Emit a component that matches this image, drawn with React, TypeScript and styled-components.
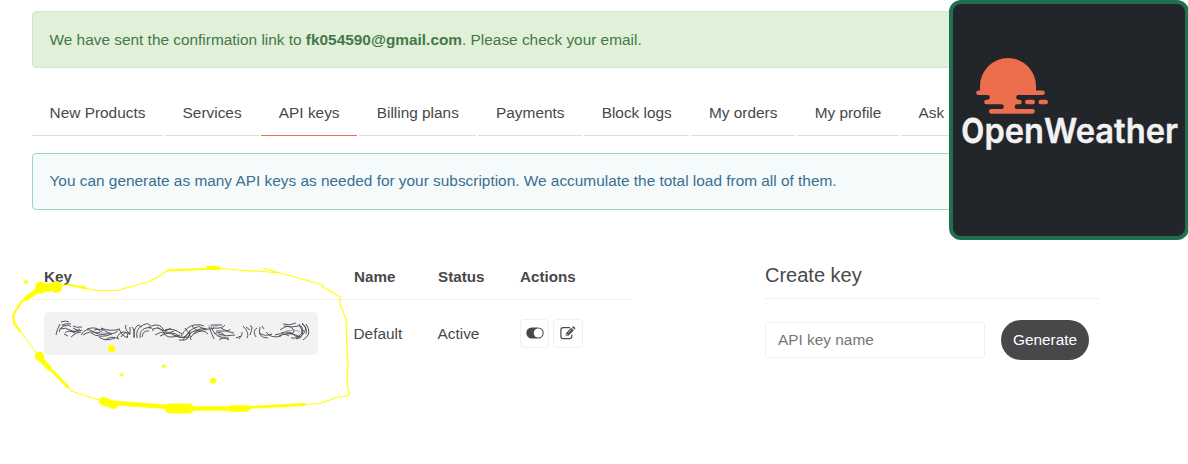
import React from "react";
import styled, { createGlobalStyle } from "styled-components";

const GlobalStyle = createGlobalStyle`
  * { box-sizing: border-box; }
  html, body { margin: 0; background: #fff; overflow: hidden; }
  body { font: 15.4px/22px "Liberation Sans", Arial, sans-serif; color: #48484a; }
`;

const Page = styled.div`
  position: relative;
  width: 1188px;
  height: 464px;
  overflow: hidden;
  padding: 11px 32px 0;
`;

const Alert = styled.div<{ $tone: "success" | "info" }>`
  height: 57px;
  padding: ${(p) => (p.$tone === "success" ? 17 : 16)}px 16.5px;
  border: 1px solid ${(p) => (p.$tone === "success" ? "#d3e7c4" : "#98d6cc")};
  border-radius: 4px;
  background: ${(p) => (p.$tone === "success" ? "#e1f0d9" : "#f5fafb")};
  color: ${(p) => (p.$tone === "success" ? "#44784a" : "#3a6f92")};
  white-space: nowrap;
`;

const Tabs = styled.nav`
  display: flex;
  gap: 2px;
  height: 45px;
  margin: 23px 0 17px;
  white-space: nowrap;
`;

const Tab = styled.a<{ $active?: boolean }>`
  height: 45px;
  padding: 11px 17.6px 0;
  border-bottom: 1px solid ${(p) => (p.$active ? "#e96e50" : "#ddd")};
  &:last-child { flex: 1; }
`;

const Columns = styled.div`
  display: flex;
  gap: 135px;
  margin-top: 46px;
`;

const KeyTable = styled.table`
  width: 598px;
  height: 111px;
  border-collapse: collapse;
  table-layout: fixed;
`;

const HeadCell = styled.th<{ $width: number }>`
  width: ${(p) => p.$width}px;
  height: 43px;
  padding: 0 0 0 12px;
  border-bottom: 1px solid #f0f0f0;
  font-size: 15.2px;
  text-align: left;
`;

const Cell = styled.td<{ $text?: boolean }>`
  height: 68px;
  padding: ${(p) => (p.$text ? 2 : 0)}px 0 0 ${(p) => (p.$text ? 11.5 : 12)}px;
`;

const KeyChip = styled.div`
  width: 274px;
  height: 43px;
  border-radius: 5px;
  background: #f2f2f2;
`;

const Actions = styled.div`
  display: flex;
  gap: 4px;
`;

const ActionButton = styled.button<{ $width: number }>`
  display: flex;
  align-items: center;
  justify-content: center;
  width: ${(p) => p.$width}px;
  height: 29px;
  padding: 0 0 1px;
  border: 1px solid #f0f0f0;
  border-radius: 4px;
  background: #fff;
  color: #48484a;
`;

const CreatePanel = styled.section`
  width: 334px;
`;

const PanelTitle = styled.h4`
  height: 43px;
  margin: 0;
  padding-top: 7px;
  border-bottom: 1px solid #f0f0f0;
  font-size: 20px;
  font-weight: 400;
  line-height: 24px;
`;

const Form = styled.form`
  display: flex;
  align-items: center;
  gap: 16px;
  margin-top: 21px;
`;

const NameInput = styled.input`
  width: 220px;
  height: 36px;
  padding: 0 12px;
  border: 1px solid #f0f0f0;
  border-radius: 3px;
  font: inherit;
  &::placeholder { color: #777; opacity: 1; }
`;

const GenerateButton = styled.button`
  width: 88px;
  height: 40px;
  padding: 0;
  border: 0;
  border-radius: 20px;
  background: #48484a;
  color: #fff;
  font: inherit;
`;

const BrandCard = styled.aside`
  position: absolute;
  top: 0;
  left: 949px;
  width: 240px;
  height: 240px;
  border: 4px solid #207050;
  border-radius: 12px;
  background: #22252a;
`;

const Drawing = styled.svg`
  display: block;
`;

const Overlay = styled.svg`
  position: absolute;
  left: 0;
  top: 250px;
  pointer-events: none;
`;

const tabs = ["New Products", "Services", "API keys", "Billing plans", "Payments", "Block logs", "My orders", "My profile", "Ask"];

function BrandLogo() {
  return (
    <Drawing width="232" height="232" viewBox="953 4 232 232">
      <g fill="#ec6e4c">
        <path d="M980 90.400V86A28 28 0 0 1 1036 86V90.400H1042.500A2.300 2.300 0 0 1 1042.500 95H1018.500A2.300 2.300 0 0 0 1018.500 99.700H1019.500A2.300 2.300 0 0 1 1019.500 104.300H1017A2.300 2.300 0 0 0 1017 109H1032.500A2.300 2.300 0 0 1 1032.500 113.700H991.300A2.300 2.300 0 0 1 991.300 109H1001.500A2.300 2.300 0 0 0 1001.500 104.300H986.500A2.300 2.300 0 0 1 986.500 99.700H987.500A2.300 2.300 0 0 0 987.500 95H978.500A2.300 2.300 0 0 1 978.500 90.400Z" />
        <rect x="1025" y="99.700" width="10" height="4.600" rx="2.300" />
        <rect x="1038.500" y="99.700" width="9.500" height="4.600" rx="2.300" />
      </g>
      <text y="143" fill="#f2f2f2" stroke="#f2f2f2" strokeWidth=".4" fontFamily="Inter, sans-serif" fontWeight="600" fontSize="33.500">
        <tspan x="961.500" textLength="22.500" lengthAdjust="spacingAndGlyphs" strokeWidth="1">O</tspan>
        <tspan x="984.500" textLength="59.500" lengthAdjust="spacingAndGlyphs">pen</tspan>
        <tspan x="1044" textLength="134" lengthAdjust="spacingAndGlyphs">Weather</tspan>
      </text>
    </Drawing>
  );
}

function ToggleIcon() {
  return (
    <Drawing width="18" height="12" viewBox="0 0 18 12">
      <rect x=".3" y=".5" width="17.400" height="11" rx="5.500" fill="#48484a" />
      <circle cx="12.200" cy="6" r="4.500" fill="#fff" />
    </Drawing>
  );
}

function EditIcon() {
  return (
    <Drawing width="16" height="14" viewBox="0 0 16 14">
      <path d="M10 1.600H3A2.100 2.100 0 0 0 .9 3.700V10.500A2.100 2.100 0 0 0 3 12.600H9.700A2.100 2.100 0 0 0 11.800 10.500V8.800" fill="none" stroke="#48484a" strokeWidth="1.200" />
      <path d="M5.800 7.200 11.300 1.700 13.800 4.200 8.300 9.700H5.800ZM12 1 12.700.4Q13.200 0 13.700.4L15.100 1.800Q15.500 2.300 15.100 2.800L14.500 3.500Z" fill="#48484a" />
      <path d="M6.500 7.700V9H7.800M8 7.100 11.400 3.700" fill="none" stroke="#fff" strokeWidth=".6" />
    </Drawing>
  );
}

function Scrambled() {
  return (
    <g fill="none" stroke="#4c4c54" strokeWidth=".95">
      <path d="M56 85Q57 79 59 76L60 74M59 82Q59 78 64 76T71 77M61 72Q66 70 69 72M62 75Q66 73 71 74M60 79Q66 77 70 80T80 79M65 83Q68 79 75 83M73 76Q76 78 82 77M71 87Q76 82 81 82M70 81Q77 83 82 80M73 78L79 81M64 84L68 86" />
      <path d="M81 85Q86 77 92 81T103 80M83 85Q91 80 96 83T111 83M87 79Q96 76 100 81M91 83Q100 89 112 84M94 80Q103 78 107 82T118 81M99 87Q105 92 115 88M101 78Q110 82 120 79M105 90Q112 85 119 89" />
      <path d="M117 88Q119 82 124 82T127 88M119 79Q123 88 128 87M121 87Q126 79 130 85M126 75Q124 79 130 84V77M132 77Q135 80 134 88M134 87Q133 79 138 75L142 77M137 88Q135 79 143 75T150 79M140 88Q139 80 146 78T153 81M142 87Q143 80 149 81" />
      <path d="M151 76Q160 73 163 79T174 81M153 79Q161 76 164 83T180 85M155 85Q160 81 166 83M157 77Q164 84 171 78M160 86Q172 80 179 86M165 80Q172 77 182 84M170 83Q179 89 188 87M174 85Q184 91 190 82M179 90Q191 92 190 80" />
      <path d="M181 86Q187 76 194 75T204 76M183 90Q191 77 198 77M185 78Q191 84 191 90M187 89Q191 79 199 81M191 87Q199 75 207 80M192 76Q196 83 206 79M194 84Q203 78 208 84M198 76Q207 81 214 78M209 77L214 89M211 77Q215 86 221 87" />
      <path d="M211 75H222M213 78Q222 79 225 75M214 84Q221 80 225 86M216 81Q226 80 234 83M218 84Q226 87 235 85M220 88H229M219 90Q223 86 229 90M221 78Q229 83 230 79M239 89Q243 85 242 82M236 88L241 86" />
      <path d="M243 76Q250 83 247 88M246 77L250 80M250 76Q254 75 250 85M256 87Q252 81 257 78M260 77Q257 88 268 88M259 83Q265 87 272 84M262 76L264 79M266 82Q271 89 281 86M275 85Q283 82 289 86" />
      <path d="M283 74Q290 76 296 73M284 76Q292 78 298 76T302 84M281 83Q290 80 294 85T304 80M279 86Q290 81 300 87M286 83Q297 85 293 79T280 80M291 88Q300 89 304 83T302 74M296 89Q307 88 299 74M303 90Q313 84 306 74M306 84Q308 79 302 73" />
      <path d="M61 75L67 76M101 83H111M208 76H218M217 86H226M286 81Q296 79 300 82" stroke="#776bb0" opacity=".65" />
    </g>
  );
}

function HighlighterLoop() {
  return (
    <g fill="none" stroke="#ff0" strokeLinecap="round" strokeLinejoin="round">
      <path d="M57 36L70 34.500L76 36L85 38L96 40.500H117L151 31L168 20.500L204 19L222 18.500L238 20L263 21.500L280 23M264 18.500L280 23L322 34.500L323 37L340 47V54L346 69L347 97L348 115L347 135L349.500 144L347 146L338 147L320 153.500L304 154.500" strokeWidth="1.200" />
      <path d="M68 34.500L76 36L86 38.500" strokeWidth="2" />
      <path d="M168 20.500L204 19" strokeWidth="2" />
      <path d="M206 18H220" strokeWidth="4" strokeLinecap="butt" />
      <path d="M41 38L57 37" strokeWidth="8" />
      <path d="M41 38L27 48" strokeWidth="5" />
      <path d="M27 48L22 51L13 65L14.500 74L20 81" strokeWidth="2.200" />
      <path d="M20 81L38 105M68 137L71 141L102 151" strokeWidth="1" />
      <path d="M39 107L49 118" strokeWidth="5" />
      <path d="M49 118L68 137" strokeWidth="3" />
      <path d="M103 151L114 155" strokeWidth="8" />
      <path d="M114 153L170 157L192 158.500H248" strokeWidth="4.500" />
      <path d="M170 158.500H189" strokeWidth="10" />
      <path d="M232 158.500H246" strokeWidth="6.500" />
      <path d="M248 157.500L304 154.500" strokeWidth="2.800" />
      <g fill="#ff0" stroke="none">
        <circle cx="41" cy="37.500" r="6" />
        <circle cx="56.500" cy="37" r="6" />
        <circle cx="39.500" cy="106.500" r="4.700" />
        <circle cx="26" cy="32" r="2" />
        <circle cx="4.500" cy="77.500" r=".6" />
        <circle cx="84" cy="37" r="1.600" />
        <circle cx="111.500" cy="98.500" r="3.700" />
        <circle cx="121.700" cy="124.700" r="1.700" />
        <circle cx="163.700" cy="116.200" r="1.800" />
        <circle cx="213" cy="130.700" r="3" />
      </g>
    </g>
  );
}

export default function App() {
  return (
    <Page>
      <GlobalStyle />
      <Alert $tone="success">We have sent the confirmation link to <b>fk054590@gmail.com</b>. Please check your email.</Alert>
      <Tabs>{tabs.map((t) => <Tab key={t} $active={t === "API keys"}>{t}</Tab>)}</Tabs>
      <Alert $tone="info">You can generate as many API keys as needed for your subscription. We accumulate the total load from all of them.</Alert>
      <Columns>
        <KeyTable>
          <thead><tr>
            <HeadCell $width={310}>Key</HeadCell>
            <HeadCell $width={84}>Name</HeadCell>
            <HeadCell $width={82}>Status</HeadCell>
            <HeadCell $width={122}>Actions</HeadCell>
          </tr></thead>
          <tbody><tr>
            <Cell><KeyChip /></Cell>
            <Cell $text>Default</Cell>
            <Cell $text>Active</Cell>
            <Cell><Actions>
              <ActionButton $width={29} aria-label="Toggle key"><ToggleIcon /></ActionButton>
              <ActionButton $width={30} aria-label="Edit key"><EditIcon /></ActionButton>
            </Actions></Cell>
          </tr></tbody>
        </KeyTable>
        <CreatePanel>
          <PanelTitle>Create key</PanelTitle>
          <Form>
            <NameInput placeholder="API key name" />
            <GenerateButton type="button">Generate</GenerateButton>
          </Form>
        </CreatePanel>
      </Columns>
      <BrandCard><BrandLogo /></BrandCard>
      <Overlay width="400" height="200" viewBox="0 0 400 200">
        <Scrambled />
        <HighlighterLoop />
      </Overlay>
    </Page>
  );
}
